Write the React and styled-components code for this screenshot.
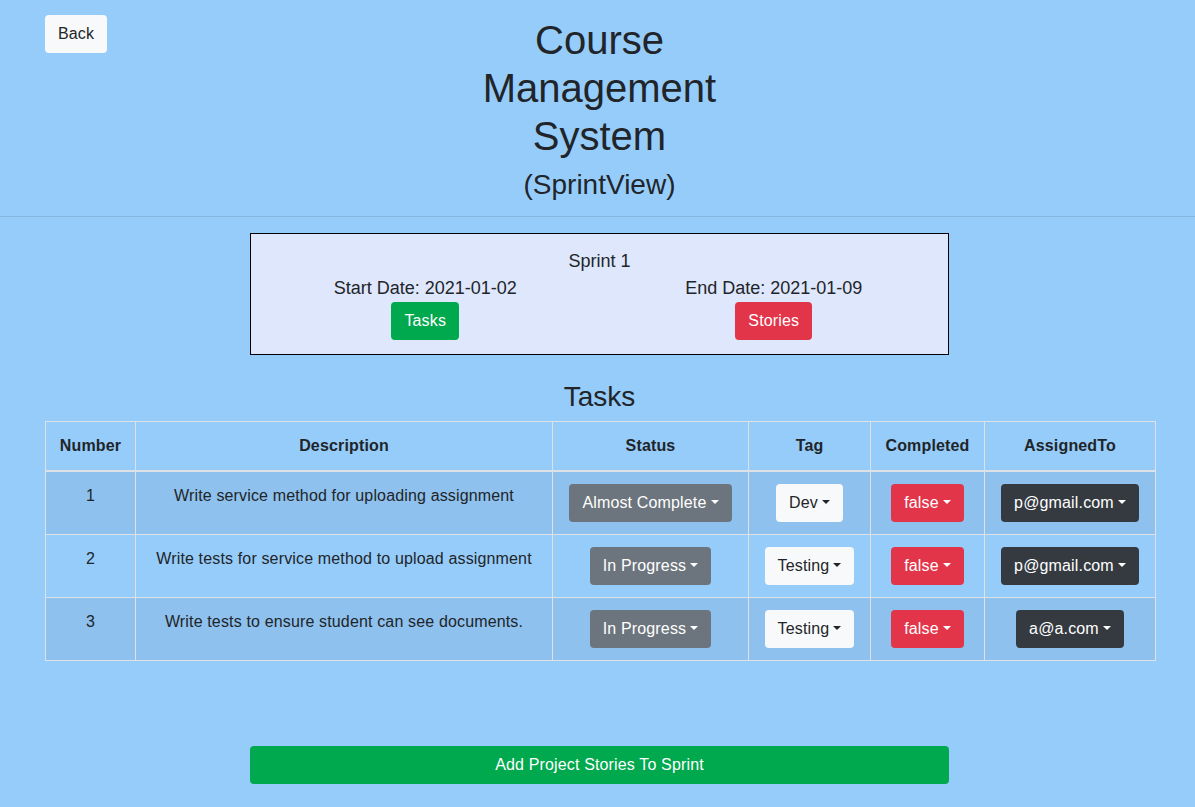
import styled, { createGlobalStyle } from "styled-components";

const GlobalStyle = createGlobalStyle`
  html, body {
    margin: 0;
    padding: 0;
    background: #96ccfa;
    overflow: hidden;
  }
  body {
    font-family: "Liberation Sans", Arial, sans-serif;
    font-size: 16px;
    line-height: 1.5;
    color: #212529;
  }
`;

const tasks = [
  {
    id: 1,
    description: "Write service method for uploading assignment",
    status: "Almost Complete",
    tag: "Dev",
    completed: "false",
    assigned: "p@gmail.com",
  },
  {
    id: 2,
    description: "Write tests for service method to upload assignment",
    status: "In Progress",
    tag: "Testing",
    completed: "false",
    assigned: "p@gmail.com",
  },
  {
    id: 3,
    description: "Write tests to ensure student can see documents.",
    status: "In Progress",
    tag: "Testing",
    completed: "false",
    assigned: "a@a.com",
  },
];

const variants = {
  light: { bg: "#f8f9fa", fg: "#212529" },
  secondary: { bg: "#6c757d", fg: "#fff" },
  danger: { bg: "#e3354a", fg: "#fff" },
  dark: { bg: "#343a40", fg: "#fff" },
  success: { bg: "#00a84e", fg: "#fff" },
};

export default function App() {
  return (
    <Page>
      <GlobalStyle />
      <Header>
        <BackCell>
          <Button $variant="light">Back</Button>
        </BackCell>
        <TitleBlock>
          <Title>Course Management System</Title>
          <SubTitle>(SprintView)</SubTitle>
        </TitleBlock>
      </Header>
      <Divider />

      <SprintCard>
        <SprintText>Sprint 1</SprintText>
        <SprintCols>
          <SprintCol>
            <SprintText>Start Date: 2021-01-02</SprintText>
            <Button $variant="success">Tasks</Button>
          </SprintCol>
          <SprintCol>
            <SprintText>End Date: 2021-01-09</SprintText>
            <Button $variant="danger">Stories</Button>
          </SprintCol>
        </SprintCols>
      </SprintCard>

      <SectionTitle>Tasks</SectionTitle>

      <Table>
        <colgroup>
          <col style={{ width: 90 }} />
          <col style={{ width: 417 }} />
          <col style={{ width: 196 }} />
          <col style={{ width: 122 }} />
          <col style={{ width: 114 }} />
          <col style={{ width: 171 }} />
        </colgroup>
        <thead>
          <tr>
            <Th>Number</Th>
            <Th>Description</Th>
            <Th>Status</Th>
            <Th>Tag</Th>
            <Th>Completed</Th>
            <Th>AssignedTo</Th>
          </tr>
        </thead>
        <tbody>
          {tasks.map((t, i) => (
            <Row key={t.id} $striped={i % 2 === 0}>
              <Td>{t.id}</Td>
              <Td>{t.description}</Td>
              <Td>
                <Toggle $variant="secondary">{t.status}</Toggle>
              </Td>
              <Td>
                <Toggle $variant="light">{t.tag}</Toggle>
              </Td>
              <Td>
                <Toggle $variant="danger">{t.completed}</Toggle>
              </Td>
              <Td>
                <Toggle $variant="dark">{t.assigned}</Toggle>
              </Td>
            </Row>
          ))}
        </tbody>
      </Table>

      <Footer>
        <WideButton $variant="success">Add Project Stories To Sprint</WideButton>
      </Footer>
    </Page>
  );
}

const Page = styled.div`
  width: 1199px;
  min-height: 807px;
  letter-spacing: 0.15px;
`;

const Header = styled.header`
  display: grid;
  grid-template-columns: 1fr 250px 1fr;
  padding-top: 15px;
`;

const BackCell = styled.div`
  padding-left: 45px;
`;

const TitleBlock = styled.div`
  text-align: center;
  letter-spacing: 0;
`;

const Title = styled.h1`
  margin: 1px 0 8px;
  font-size: 40px;
  font-weight: 500;
  line-height: 48px;
`;

const SubTitle = styled.h3`
  margin: 0;
  font-size: 28px;
  font-weight: 500;
  line-height: 34px;
`;

const Divider = styled.hr`
  margin: 14px 0 16px;
  border: 0;
  border-top: 1px solid rgba(0, 0, 0, 0.1);
`;

const Button = styled.button`
  display: inline-block;
  border: 1px solid transparent;
  border-radius: 4px;
  padding: 6px 12px;
  font-family: inherit;
  font-size: 16px;
  letter-spacing: inherit;
  line-height: 24px;
  cursor: pointer;
  background: ${(p) => variants[p.$variant].bg};
  color: ${(p) => variants[p.$variant].fg};
`;

const Toggle = styled(Button)`
  white-space: nowrap;

  &::after {
    content: "";
    display: inline-block;
    margin-left: 0.255em;
    vertical-align: 0.255em;
    border-top: 0.3em solid;
    border-right: 0.3em solid transparent;
    border-left: 0.3em solid transparent;
  }
`;

const SprintCard = styled.section`
  width: 699px;
  box-sizing: border-box;
  margin: 0 auto;
  padding: 14px 0 14px;
  border: 1px solid #000;
  background: #dfe7fc;
  text-align: center;
`;

const SprintText = styled.div`
  font-size: 18px;
  line-height: 27px;
  letter-spacing: 0;
`;

const SprintCols = styled.div`
  display: grid;
  grid-template-columns: 1fr 1fr;
`;

const SprintCol = styled.div`
  display: flex;
  flex-direction: column;
  align-items: center;
`;

const SectionTitle = styled.h3`
  margin: 25px 0 7px;
  font-size: 28px;
  font-weight: 500;
  line-height: 34px;
  letter-spacing: 0;
  text-align: center;
`;

const Table = styled.table`
  width: 1110px;
  margin: 0 auto 0 45px;
  border-collapse: collapse;
  table-layout: fixed;
`;

const Th = styled.th`
  padding: 12px;
  border: 1px solid #dee2e6;
  border-bottom-width: 2px;
  font-weight: 700;
  text-align: center;
  line-height: 24px;
`;

const Row = styled.tr`
  background: ${(p) => (p.$striped ? "rgba(0, 0, 0, 0.05)" : "transparent")};
`;

const Td = styled.td`
  padding: 12px;
  border: 1px solid #dee2e6;
  text-align: center;
  vertical-align: top;
  line-height: 24px;
`;

const Footer = styled.div`
  display: flex;
  justify-content: center;
  margin-top: 85px;
`;

const WideButton = styled(Button)`
  width: 699px;
  padding: 6px 12px;
`;
